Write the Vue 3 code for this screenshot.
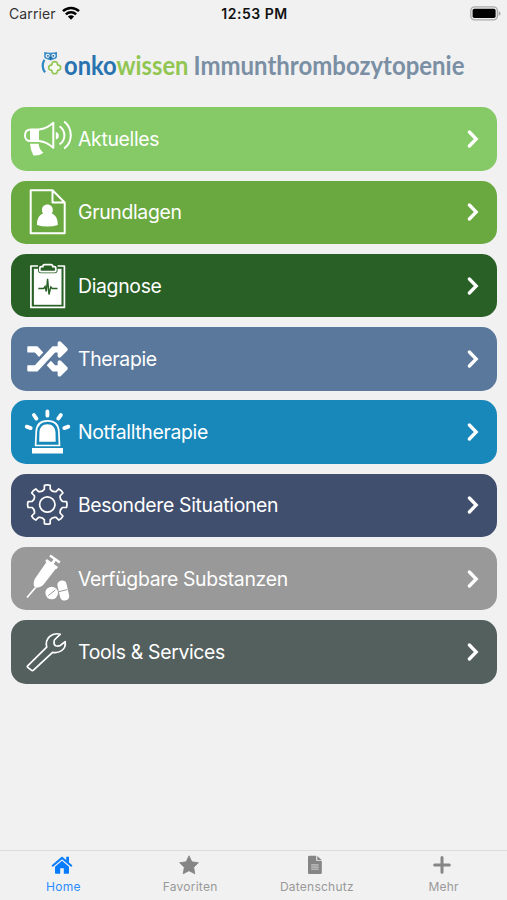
<template>
  <div class="app">
    <!-- Statusleiste -->
    <header class="status-bar">
      <div class="carrier">
        <span class="carrier-name">Carrier</span>
        <svg class="wifi" viewBox="0 0 18 14">
          <path d="M1 5.2a11.6 11.6 0 0 1 16 0" />
          <path d="M3.9 8.3a7.4 7.4 0 0 1 10.2 0" />
          <path class="wifi-dot" d="M5.9 10.6a4.6 4.6 0 0 1 6.2 0L9 13.8z" />
        </svg>
      </div>
      <span class="clock">12:53 PM</span>
      <svg class="battery" viewBox="0 0 31 15">
        <rect class="battery-case" x="0.8" y="0.9" width="26.6" height="13" rx="3.8" />
        <rect x="2.6" y="2.7" width="23" height="9.4" rx="1.8" />
        <path class="battery-pin" d="M28.6 5v5q2-.9 2-2.5t-2-2.5z" />
      </svg>
    </header>

    <!-- Logo -->
    <div class="brand">
      <svg class="brand-logo" viewBox="0 0 507 40">
        <g class="owl">
          <path class="owl-head" d="M44.2 7q6.400 1.600 12.800 0v4.600q0 2.400-3 2.600l-3.300 1.400-3.400-1.400q-3.100-.2-3.100-2.600z" />
          <circle class="owl-eye" cx="47.700" cy="10.800" r="2.100" />
          <circle class="owl-eye" cx="53.500" cy="10.800" r="2.100" />
          <circle class="owl-pupil" cx="47.900" cy="10.800" r="0.900" />
          <circle class="owl-pupil" cx="53.300" cy="10.800" r="0.900" />
          <path class="owl-beak" d="M49.300 11.800h2.600l-1.300 3.400z" />
          <path class="owl-wing" d="M44.400 14.800q-3.700 6.400.6 12.600" />
          <path
            class="owl-cross"
            d="M52 19.400c-.6-3.600 6-3.600 5.400 0l.6.800c3.600-.4 3.600 5.400 0 5l-.6.800c.6 3.600-6 3.600-5.400 0l-.6-.8c-3.600.4-3.600-5.400 0-5z"
          />
        </g>
        <text class="logo-text" x="64" y="29.500" textLength="124.500" lengthAdjust="spacingAndGlyphs"><tspan class="onko">onko</tspan><tspan class="wissen">wissen</tspan></text>
        <text class="logo-text topic" x="193.500" y="29.500" textLength="271" lengthAdjust="spacingAndGlyphs">Immunthrombozytopenie</text>
      </svg>
    </div>

    <!-- Menü -->
    <nav class="menu">
      <button
        v-for="item in items"
        :key="item.icon"
        class="menu-item"
        :class="item.icon"
      >
        <svg class="menu-icon" viewBox="0 0 52 56">
          <g v-if="item.icon === 'news'">
            <path class="line" d="M10 18.6q-6 0-6 5.8t6 5.6h8q8 1 14.3 6.8V11.8Q26 17.6 18 18.6z" />
            <path class="fill" d="M9 18h9v12.4H9zM9 32.8h8.6q.4 5.600 4.800 9-4.800 3.600-10 2.600Q9.600 39.600 9 32.800zM34.800 21q3 .8 3 3.700t-3 3.700z" />
            <path class="line" d="M38.600 15.200q4.800 3.600 4.800 9.300t-4.800 8.800M43.200 10.600q6.600 5.400 6.600 13.700t-6.600 13.200" />
          </g>
          <g v-else-if="item.icon === 'basics'">
            <path class="line" d="M9.700 6.300h21.800l12.200 12.200v30.800h-34zM31.500 6.300v12.200h12.200" />
            <path class="fill" d="M26.400 20.400c3.200 0 5.400 2.300 5.400 5.300 0 1.600-.4 2.800-1 3.900 4.400 1.800 6 5.800 6 11.400q-4.600 1.600-10.400 1.600T16 41c0-5.600 1.600-9.600 6-11.400a7 7 0 0 1-1-3.900c0-3 2.200-5.300 5.400-5.300z" />
          </g>
          <g v-else-if="item.icon === 'diagnosis'">
            <rect class="line thin" x="9.900" y="8" width="33.500" height="41.400" />
            <rect class="fill" x="12.900" y="10.800" width="27.600" height="36" />
            <rect class="clip-gap" x="17" y="4.800" width="19.600" height="10.400" rx="3" />
            <path class="clip" d="M18.800 12.600V10q0-1.400 1.600-1.400h1.400q.2-2 1.800-2h6.400q1.600 0 1.800 2h1.400q1.600 0 1.600 1.400v2.600q0 1-1.200 1H20q-1.200 0-1.200-1z" />
            <path class="pulse" d="M17.300 30.500h5.400l1.400-2 1.200 5 1.300-12.600 1.400 15.600 1.800-7.600 1.400 1.600h5.300" />
          </g>
          <g v-else-if="item.icon === 'therapy'" transform="translate(6.300 7.700) scale(.079)">
            <path
              class="fill"
              d="M504.971 359.029c9.373 9.373 9.373 24.569 0 33.941l-80 79.984c-15.010 15.010-40.971 4.490-40.971-16.971V416h-58.785a12.004 12.004 0 0 1-8.773-3.812l-70.556-75.596 53.333-57.143L352 336h32v-39.981c0-21.438 25.943-31.998 40.971-16.971l80 79.981zM12 176h84l52.781 56.551 53.333-57.143-70.556-75.596A11.999 11.999 0 0 0 122.785 96H12c-6.627 0-12 5.373-12 12v56c0 6.627 5.373 12 12 12zm372 0v39.984c0 21.460 25.961 31.980 40.971 16.971l80-79.984c9.373-9.373 9.373-24.569 0-33.941l-80-79.981C409.943 24.021 384 34.582 384 56.019V96h-58.785a12.004 12.004 0 0 0-8.773 3.812L96 336H12c-6.627 0-12 5.373-12 12v56c0 6.627 5.373 12 12 12h110.785c3.326 0 6.503-1.381 8.773-3.812L352 176h32z"
            />
          </g>
          <g v-else-if="item.icon === 'emergency'">
            <path class="rays" d="M26.400 7.500v4.200M12.900 11l2.500 3.600M39.900 11l-2.700 3.600M5.700 22.600l4 1.500M47.300 22.600l-4 1.500" />
            <path class="line thin" d="M14.600 41.500L15.200 28.400c.2-7.400 4.200-11.600 11.300-11.600s11.200 4.200 11.400 11.600l.6 13.100z" />
            <path class="fill" d="M18.200 37.800l.2-9.400c.2-5 3-8.200 8-8.200s7.900 3.200 8.100 8.200l.2 9.400zM11 44.100h31v5.500H11z" />
          </g>
          <g v-else-if="item.icon === 'situations'">
            <path class="line gear" :d="gearPath" />
            <circle class="line gear" cx="26.300" cy="27.500" r="7.700" />
          </g>
          <g v-else-if="item.icon === 'drugs'">
            <path class="needle" d="M6 46.500l8.600-10" />
            <path class="fill" d="M26 10.200l9.600 6.600L22.800 33.200q-2.800 3.200-8 3.600l-1.800-1.700q-1-4.600 1.400-8z" />
            <path class="plunger" d="M25 9.200l11.200 8M31.400 12.400l3-4.400" />
            <path class="plunger-end" d="M29 4.600l9.800 7" />
            <circle class="fill" cx="30.700" cy="42" r="6.300" />
            <path class="cut" d="M27.200 44.600l7.200-5.600" />
            <rect class="fill" x="37.700" y="29.400" width="9.200" height="20.200" rx="4.200" transform="rotate(-13 42.300 39.500)" />
            <path class="cut" d="M38 40.600l8.400-2" />
          </g>
          <g v-else>
            <path
              class="line gear"
              d="M6.700 41.800l19-18.700q-1.600-6.300 2.800-10.500 4.400-4 10.800-2.400l-5.900 5.800q-1.200 4.400 1.200 5.700 2.400.8 4.600-.2l5-3.900q.8 6-3.600 9-4.400 2.800-9 1.700L12.500 46.200q-1.100 1-2.200 0l-3.600-2.800q-.8-.8 0-1.600z"
            />
          </g>
        </svg>
        <span class="menu-label">{{ item.label }}</span>
        <svg class="chevron" viewBox="0 0 12 18">
          <path d="M2.400 2l6.800 7-6.800 7" />
        </svg>
      </button>
    </nav>

    <!-- Tableiste -->
    <footer class="tab-bar">
      <button
        v-for="tab in tabs"
        :key="tab.label"
        class="tab"
        :class="{ active: activeTab === tab.label }"
        @click="activeTab = tab.label"
      >
        <svg class="tab-icon" viewBox="0 0 22 20">
          <g v-if="tab.icon === 'home'">
            <path d="M11 5.700l7 6v6.200q0 .8-.8.800h-4.400v-5.400H9.200v5.400H4.800q-.8 0-.8-.8v-6.200z" />
            <path class="roof" d="M1.700 10.700L11 2.900l9.300 7.800" />
            <path d="M15.200 1.800H18v6l-2.800-2.400z" />
          </g>
          <path v-else-if="tab.icon === 'star'" class="star" d="M11 .800l2.900 6 6.500.9-4.700 4.600 1.100 6.500-5.800-3.100-5.800 3.100 1.100-6.500L1.600 7.700l6.500-.9z" />
          <g v-else-if="tab.icon === 'doc'">
            <path d="M4 2q0-1.200 1.200-1.200h7v5h5.600v12q0 1.200-1.200 1.200H5.200Q4 19 4 17.800zM13.300.900l4.400 4H13.300z" />
            <path class="doc-lines" d="M7.200 9h7.400v6H7.200z" />
            <path d="M7.200 10.700h7.400v.5H7.200zM7.200 12.900h7.400v.5H7.200z" />
          </g>
          <path v-else class="plus" d="M11 2.600v14.600M3.700 9.900h14.600" />
        </svg>
        <span class="tab-label">{{ tab.label }}</span>
      </button>
    </footer>
  </div>
</template>

<script setup>
import { ref } from 'vue'

const activeTab = ref('Home')

// Menüpunkte
const items = [
  { label: 'Aktuelles', icon: 'news' },
  { label: 'Grundlagen', icon: 'basics' },
  { label: 'Diagnose', icon: 'diagnosis' },
  { label: 'Therapie', icon: 'therapy' },
  { label: 'Notfalltherapie', icon: 'emergency' },
  { label: 'Besondere Situationen', icon: 'situations' },
  { label: 'Verfügbare Substanzen', icon: 'drugs' },
  { label: 'Tools & Services', icon: 'tools' }
]

const tabs = [
  { label: 'Home', icon: 'home' },
  { label: 'Favoriten', icon: 'star' },
  { label: 'Datenschutz', icon: 'doc' },
  { label: 'Mehr', icon: 'plus' }
]

// Zahnrad mit acht Zähnen
const polar = (angle, radius) => {
  const rad = (angle * Math.PI) / 180
  return `${(26.3 + radius * Math.cos(rad)).toFixed(2)} ${(27.5 + radius * Math.sin(rad)).toFixed(2)}`
}

const gearPath = Array.from({ length: 8 }, (_, i) => {
  const a = i * 45
  return `${i ? 'L' : 'M'}${polar(a - 11, 15.6)}L${polar(a - 8.5, 19.4)}Q${polar(a, 20.2)} ${polar(a + 8.5, 19.4)}L${polar(a + 11, 15.6)}Q${polar(a + 22.5, 13.2)} ${polar(a + 34, 15.6)}`
}).join('') + 'Z'
</script>

<style>
body {
  margin: 0;
  background: #f1f1f1;
}
</style>

<style scoped>
.app {
  width: 100%;
  height: 100vh;
  display: flex;
  flex-direction: column;
  background: #f1f1f1;
  font-family: Inter, "Liberation Sans", sans-serif;
  overflow: hidden;
}

button {
  border: none;
  padding: 0;
  font-family: inherit;
  cursor: pointer;
}

/* Statusleiste */
.status-bar {
  height: 27px;
  display: grid;
  grid-template-columns: 1fr auto 1fr;
  align-items: center;
  padding: 0 7px 0 9px;
  box-sizing: border-box;
  color: #111;
}

.carrier {
  display: flex;
  align-items: center;
  gap: 6px;
}

.carrier-name {
  font-size: 14px;
  letter-spacing: 0.1px;
  color: #333;
}

.wifi {
  width: 18px;
  height: 14px;
  margin-top: -2px;
  fill: none;
  stroke: #000;
  stroke-width: 2.5;
}

.wifi .wifi-dot {
  fill: #000;
  stroke: none;
}

.clock {
  font-size: 14px;
  font-weight: 600;
  letter-spacing: 0.5px;
}

.battery {
  width: 31px;
  height: 15px;
  margin-top: -1px;
  margin-right: -1px;
  justify-self: end;
}

.battery-case {
  fill: #ededed;
  stroke: #aaa;
  stroke-width: 1.3;
}

.battery-pin {
  fill: #aaa;
}

/* Logo */
.brand {
  height: 80.3px;
  padding-top: 18px;
  box-sizing: border-box;
}

.brand-logo {
  display: block;
  width: 507px;
  height: 40px;
}

.logo-text {
  font-family: Lato, "Open Sans", sans-serif;
  font-size: 26.5px;
  font-weight: 700;
}

.onko {
  fill: #2873af;
}

.wissen {
  fill: #92c653;
}

.topic {
  fill: #7a8fa4;
}

.owl-head {
  fill: #3a8cc6;
}

.owl-eye {
  fill: #e8f2f8;
}

.owl-pupil,
.owl-beak {
  fill: #235f98;
}

.owl-wing {
  fill: none;
  stroke: #2f87c2;
  stroke-width: 2.2;
}

.owl-cross {
  fill: #f6f8f2;
  stroke: #92c653;
  stroke-width: 1.7;
}

/* Menü */
.menu {
  flex: 1;
  display: flex;
  flex-direction: column;
  gap: 9.9px;
  padding: 0 10px 0 11px;
}

.menu-item {
  height: 63.4px;
  flex-shrink: 0;
  display: flex;
  align-items: center;
  padding: 0 18px 0 10px;
  border-radius: 15px;
  color: #fff;
  text-align: left;
}

.news { background: #86ca67; }
.basics { background: #6aa940; }
.diagnosis { background: #286026; }
.therapy { background: #59789c; }
.emergency { background: #1888bb; }
.situations { background: #414f6e; }
.drugs { background: #999; }
.tools { background: #54605e; }

.menu-icon {
  width: 52px;
  height: 56px;
  flex-shrink: 0;
}

.fill {
  fill: #fff;
}

.line {
  fill: none;
  stroke: #fff;
  stroke-width: 2;
  stroke-linejoin: round;
}

.thin {
  stroke-width: 1.7;
}

.gear {
  stroke-width: 1.7;
}

.clip-gap {
  fill: #286026;
}

.clip {
  fill: none;
  stroke: #fff;
  stroke-width: 1.8;
}

.pulse {
  fill: none;
  stroke: #286026;
  stroke-width: 1.4;
}

.rays {
  stroke: #fff;
  stroke-width: 3.8;
  stroke-linecap: round;
}

.needle {
  stroke: #fff;
  stroke-width: 1.8;
}

.plunger {
  fill: none;
  stroke: #fff;
  stroke-width: 2.8;
}

.plunger-end {
  stroke: #fff;
  stroke-width: 2.4;
}

.cut {
  stroke: #999;
  stroke-width: 1;
}

.menu-label {
  flex: 1;
  margin-left: 5px;
  font-size: 19.4px;
  letter-spacing: -0.32px;
  white-space: nowrap;
}

.chevron {
  width: 12px;
  height: 18px;
  fill: none;
  stroke: #fff;
  stroke-width: 3.3;
  stroke-linecap: round;
}

/* Tableiste */
.tab-bar {
  height: 50px;
  display: flex;
  border-top: 1px solid #dcdcdc;
  box-sizing: border-box;
}

.tab {
  flex: 1;
  display: flex;
  flex-direction: column;
  align-items: center;
  padding-top: 4px;
  background: transparent;
  color: #999;
}

.tab-icon {
  width: 22px;
  height: 20px;
  margin-right: 3px;
  fill: #858585;
}

.roof {
  fill: none;
  stroke: #087cff;
  stroke-width: 2;
  stroke-linecap: round;
}

.star {
  stroke: #858585;
  stroke-width: 0.8;
  stroke-linejoin: round;
}

.doc-lines {
  fill: #b5b5b5;
}

.plus {
  stroke: #858585;
  stroke-width: 3;
  stroke-linecap: round;
}

.tab-label {
  margin-top: 4px;
  font-size: 12px;
  line-height: 15px;
  letter-spacing: 0.25px;
}

.tab.active {
  color: #2b8dff;
}

.tab.active .tab-icon {
  fill: #087cff;
}
</style>
